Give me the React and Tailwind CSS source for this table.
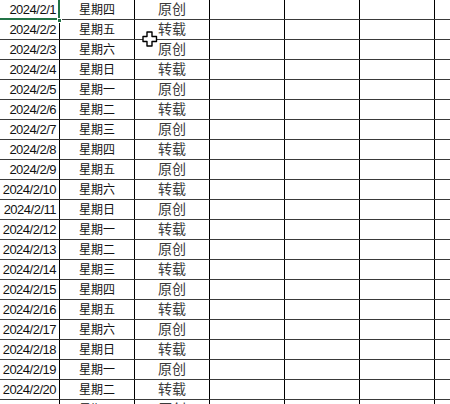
import React from 'react';

const weekdays = ['星期四', '星期五', '星期六', '星期日', '星期一', '星期二', '星期三'];

const rows = Array.from({ length: 22 }, (_, i) => ({
  date: `2024/2/${i + 1}`,
  day: weekdays[i % 7],
  kind: i % 2 === 0 ? '原创' : '转载',
}));

function Cursor() {
  return (
    <svg className="absolute left-[142px] top-[31px]" width="16" height="16" viewBox="0 0 16 16">
      <path
        d="M5 1h5v4.5h4.5v5h-4.5v4.5h-5v-4.5h-4v-5h4z"
        fill="#fff"
        stroke="#000"
        strokeWidth="1.4"
        strokeLinejoin="round"
      />
    </svg>
  );
}

export default function App() {
  return (
    <div className="relative w-[450px] h-[404px] overflow-hidden bg-white" style={{ fontFamily: '"Liberation Sans", "Noto Sans CJK SC", sans-serif' }}>
      {rows.map((r, i) => (
        <div key={i} className="flex h-[20px] border-b border-[#3a3a3a]">
          <div className="w-[60px] shrink-0 border-r border-black flex items-center justify-end pr-[3px] text-[13px] tracking-[-0.5px] text-[#111]">
            {r.date}
          </div>
          <div className="w-[75px] shrink-0 border-r border-black flex items-center justify-center text-[12px] text-[#111]">
            {r.day}
          </div>
          <div className="w-[75px] shrink-0 border-r border-black flex items-center justify-center text-[14px] text-[#3a3a3a]">
            {r.kind}
          </div>
          <div className="w-[75px] shrink-0 border-r border-black" />
          <div className="w-[75px] shrink-0 border-r border-black" />
          <div className="w-[75px] shrink-0 border-r border-black" />
          <div className="flex-1" />
        </div>
      ))}

      {/* selected cell */}
      <div className="absolute left-[-2px] top-[-2px] w-[62px] h-[22px] border-2 border-[#217346]" />
      <div className="absolute left-[57px] top-[18px] w-[5px] h-[5px] bg-[#217346] border border-white" />

      <Cursor />
    </div>
  );
}
